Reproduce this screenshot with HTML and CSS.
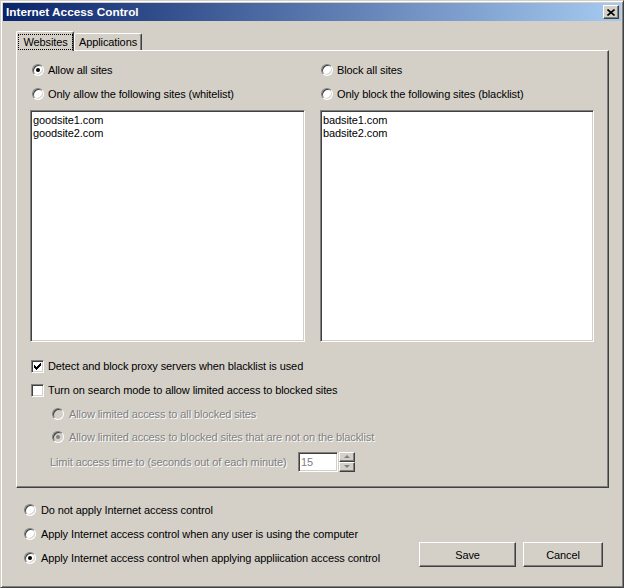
FILE: index.html
```html
<!DOCTYPE html>
<html lang="en">

<head>
    <meta charset="UTF-8">
    <title>Internet Access Control</title>
    <link rel="stylesheet" href="styles.css">
</head>

<body>
    <div class="window">
        <div class="titlebar">
            <span class="title">Internet Access Control</span>
            <span class="close-btn">
                <svg width="8" height="7" viewBox="0 0 8 7">
                    <path d="M0.5 0.5L7.5 6.5M7.5 0.5L0.5 6.5" stroke="#000" stroke-width="1.6" />
                </svg>
            </span>
        </div>

        <div class="dialog-body">
            <div class="tabs">
                <div class="tab active"><span class="focus">Websites</span></div>
                <div class="tab">Applications</div>
            </div>

            <div class="panel">
                <div class="columns">
                    <div class="col">
                        <div class="opt"><span class="radio checked"></span>Allow all sites</div>
                        <div class="opt"><span class="radio"></span>Only allow the following sites (whitelist)</div>
                        <div class="listbox">
                            <div>goodsite1.com</div>
                            <div>goodsite2.com</div>
                        </div>
                    </div>
                    <div class="col right">
                        <div class="opt"><span class="radio"></span>Block all sites</div>
                        <div class="opt"><span class="radio"></span>Only block the following sites (blacklist)</div>
                        <div class="listbox">
                            <div>badsite1.com</div>
                            <div>badsite2.com</div>
                        </div>
                    </div>
                </div>

                <div class="checks">
                    <div class="opt">
                        <span class="checkbox">
                            <svg width="7" height="7" viewBox="0 0 7 7">
                                <path d="M0 2h1v1h1v1h1v-1h1v-1h1v-1h1v-1h1v3h-1v1h-1v1h-1v1h-1v1h-1v-1h-1v-1h-1z" fill="#000" />
                            </svg>
                        </span>Detect and block proxy servers when blacklist is used
                    </div>
                    <div class="opt"><span class="checkbox"></span>Turn on search mode to allow limited access to blocked sites</div>
                    <div class="opt sub short disabled"><span class="radio"></span>Allow limited access to all blocked sites</div>
                    <div class="opt sub disabled"><span class="radio checked"></span>Allow limited access to blocked sites that are not on the blacklist</div>
                    <div class="limit-row disabled">
                        <span class="limit-label">Limit access time to (seconds out of each minute)</span>
                        <div class="spin">
                            <span class="spin-edit">15</span>
                            <span class="spin-btns">
                                <span class="spin-btn"><span class="arrow up"></span></span>
                                <span class="spin-btn"><span class="arrow down"></span></span>
                            </span>
                        </div>
                    </div>
                </div>
            </div>

            <div class="footer">
                <div class="footer-opts">
                    <div class="opt"><span class="radio"></span>Do not apply Internet access control</div>
                    <div class="opt"><span class="radio"></span>Apply Internet access control when any user is using the computer</div>
                    <div class="opt"><span class="radio checked"></span>Apply Internet access control when applying appliication access control</div>
                </div>
                <div class="buttons">
                    <button type="button" class="btn save">Save</button>
                    <button type="button" class="btn cancel">Cancel</button>
                </div>
            </div>
        </div>
    </div>
</body>

</html>
```

FILE: styles.css
```css
body {
    margin: 0;
    background-color: #d4d0c8;
    font-family: "Liberation Sans", Arial, sans-serif;
    font-size: 11px;
    letter-spacing: -0.1px;
    color: #000;
}

.window {
    width: 624px;
    height: 588px;
    box-sizing: border-box;
    border: 1px solid;
    border-color: #d4d0c8 #404040 #404040 #d4d0c8;
    box-shadow: inset 1px 1px #fff, inset -1px -1px #808080;
    padding: 2px;
    background-color: #d4d0c8;
}

/* title bar */
.titlebar {
    height: 18px;
    display: flex;
    align-items: center;
    justify-content: space-between;
    padding-left: 3px;
    background: linear-gradient(to right, #0a246a, #a6caf0);
}

.title {
    color: #fff;
    font-weight: bold;
    font-size: 11.8px;
    letter-spacing: 0;
}

.close-btn {
    width: 16px;
    height: 14px;
    box-sizing: border-box;
    margin-right: 2px;
    display: flex;
    align-items: center;
    justify-content: center;
    background-color: #d4d0c8;
    border: 1px solid;
    border-color: #fff #404040 #404040 #fff;
    box-shadow: inset -1px -1px #808080;
}

.close-btn svg {
    display: block;
    margin-top: 1px;
}

.dialog-body {
    padding: 10px 0 0 13px;
}

/* tabs */
.tabs {
    display: flex;
    align-items: flex-start;
    height: 20px;
    margin-bottom: -1px;
    position: relative;
    z-index: 1;
}

.tab {
    box-sizing: border-box;
    border: 1px solid;
    border-bottom: none;
    border-color: #fff #404040 #404040 #fff;
    border-radius: 2px 2px 0 0;
    box-shadow: inset -1px 0 #808080;
    background-color: #d4d0c8;
    width: 68px;
    height: 17px;
    margin-top: 2px;
    text-align: center;
    line-height: 16px;
}

.tab.active {
    width: 58px;
    height: 20px;
    margin-top: 0;
    padding: 2px 0 0 1px;
}

.focus {
    display: block;
    width: 55px;
    height: 16px;
    box-sizing: border-box;
    border: 1px dotted #000;
    line-height: 14px;
}

/* panel */
.panel {
    width: 593px;
    height: 438px;
    box-sizing: border-box;
    border: 1px solid;
    border-color: #fff #404040 #404040 #fff;
    box-shadow: inset -1px -1px #808080;
    padding: 7px 0 0 13px;
}

.columns {
    display: grid;
    grid-template-columns: 275px 274px;
    gap: 15px;
}

.opt {
    height: 24px;
    display: flex;
    align-items: center;
    white-space: nowrap;
}

.col .opt {
    padding-left: 2px;
}

.col.right .opt {
    padding-left: 1px;
}

.radio {
    width: 12px;
    height: 12px;
    box-sizing: border-box;
    border-radius: 50%;
    border: 1px solid;
    border-color: #808080 #fff #fff #808080;
    box-shadow: inset 1px 1px #404040, inset -1px -1px #d4d0c8;
    background-color: #fff;
    margin-right: 4px;
    flex-shrink: 0;
    display: flex;
    align-items: center;
    justify-content: center;
}

.radio.checked::after {
    content: "";
    width: 4px;
    height: 4px;
    border-radius: 50%;
    background-color: #000;
}

.listbox {
    margin-top: 4px;
    height: 232px;
    box-sizing: border-box;
    background-color: #fff;
    border: 1px solid;
    border-color: #808080 #fff #fff #808080;
    box-shadow: inset 1px 1px #404040, inset -1px -1px #d4d0c8;
    padding: 3px 2px 2px;
    line-height: 13px;
}

.checks {
    margin-top: 12px;
}

.checkbox {
    width: 13px;
    height: 13px;
    box-sizing: border-box;
    border: 1px solid;
    border-color: #808080 #fff #fff #808080;
    box-shadow: inset 1px 1px #404040, inset -1px -1px #d4d0c8;
    background-color: #fff;
    margin: 0 4px 0 1px;
    flex-shrink: 0;
    display: flex;
    align-items: center;
    justify-content: center;
}

.checks .opt.sub {
    padding-left: 22px;
}

.checks .opt.short {
    height: 23px;
}

.opt.sub .radio {
    margin-right: 5px;
}

.disabled {
    color: #808080;
    text-shadow: 1px 1px 0 #fff;
}

.disabled .radio {
    background-color: #d4d0c8;
}

.disabled .radio.checked::after {
    background-color: #808080;
}

.limit-row {
    height: 25px;
    display: flex;
    align-items: center;
    padding-left: 20px;
}

.limit-label {
    width: 248px;
    white-space: nowrap;
}

.spin {
    display: flex;
}

.spin-edit {
    width: 40px;
    height: 20px;
    box-sizing: border-box;
    border: 1px solid;
    border-color: #808080 #fff #fff #808080;
    box-shadow: inset 1px 1px #404040, inset -1px -1px #d4d0c8;
    background-color: #fff;
    padding-left: 2px;
    line-height: 18px;
    text-shadow: none;
}

.spin-btns {
    margin-left: 1px;
    display: flex;
    flex-direction: column;
}

.spin-btn {
    width: 16px;
    height: 10px;
    box-sizing: border-box;
    border: 1px solid;
    border-color: #fff #404040 #404040 #fff;
    box-shadow: inset -1px -1px #808080;
    display: flex;
    align-items: center;
    justify-content: center;
}

.arrow {
    width: 0;
    height: 0;
    border-left: 3px solid transparent;
    border-right: 3px solid transparent;
}

.arrow.up {
    border-bottom: 3px solid #808080;
}

.arrow.down {
    border-top: 3px solid #808080;
}

/* bottom part */
.footer {
    display: flex;
    justify-content: space-between;
    align-items: flex-start;
    padding: 10px 18px 0 8px;
}

.footer .radio {
    margin-right: 5px;
}

.buttons {
    display: flex;
    gap: 7px;
    margin-top: 44px;
}

.btn {
    height: 25px;
    box-sizing: border-box;
    border: 1px solid;
    border-color: #fff #404040 #404040 #fff;
    box-shadow: inset -1px -1px #808080;
    background-color: #d4d0c8;
    font-family: inherit;
    font-size: 11px;
    letter-spacing: inherit;
    color: #000;
    padding: 0;
}

.btn.save {
    width: 97px;
}

.btn.cancel {
    width: 80px;
}
```
